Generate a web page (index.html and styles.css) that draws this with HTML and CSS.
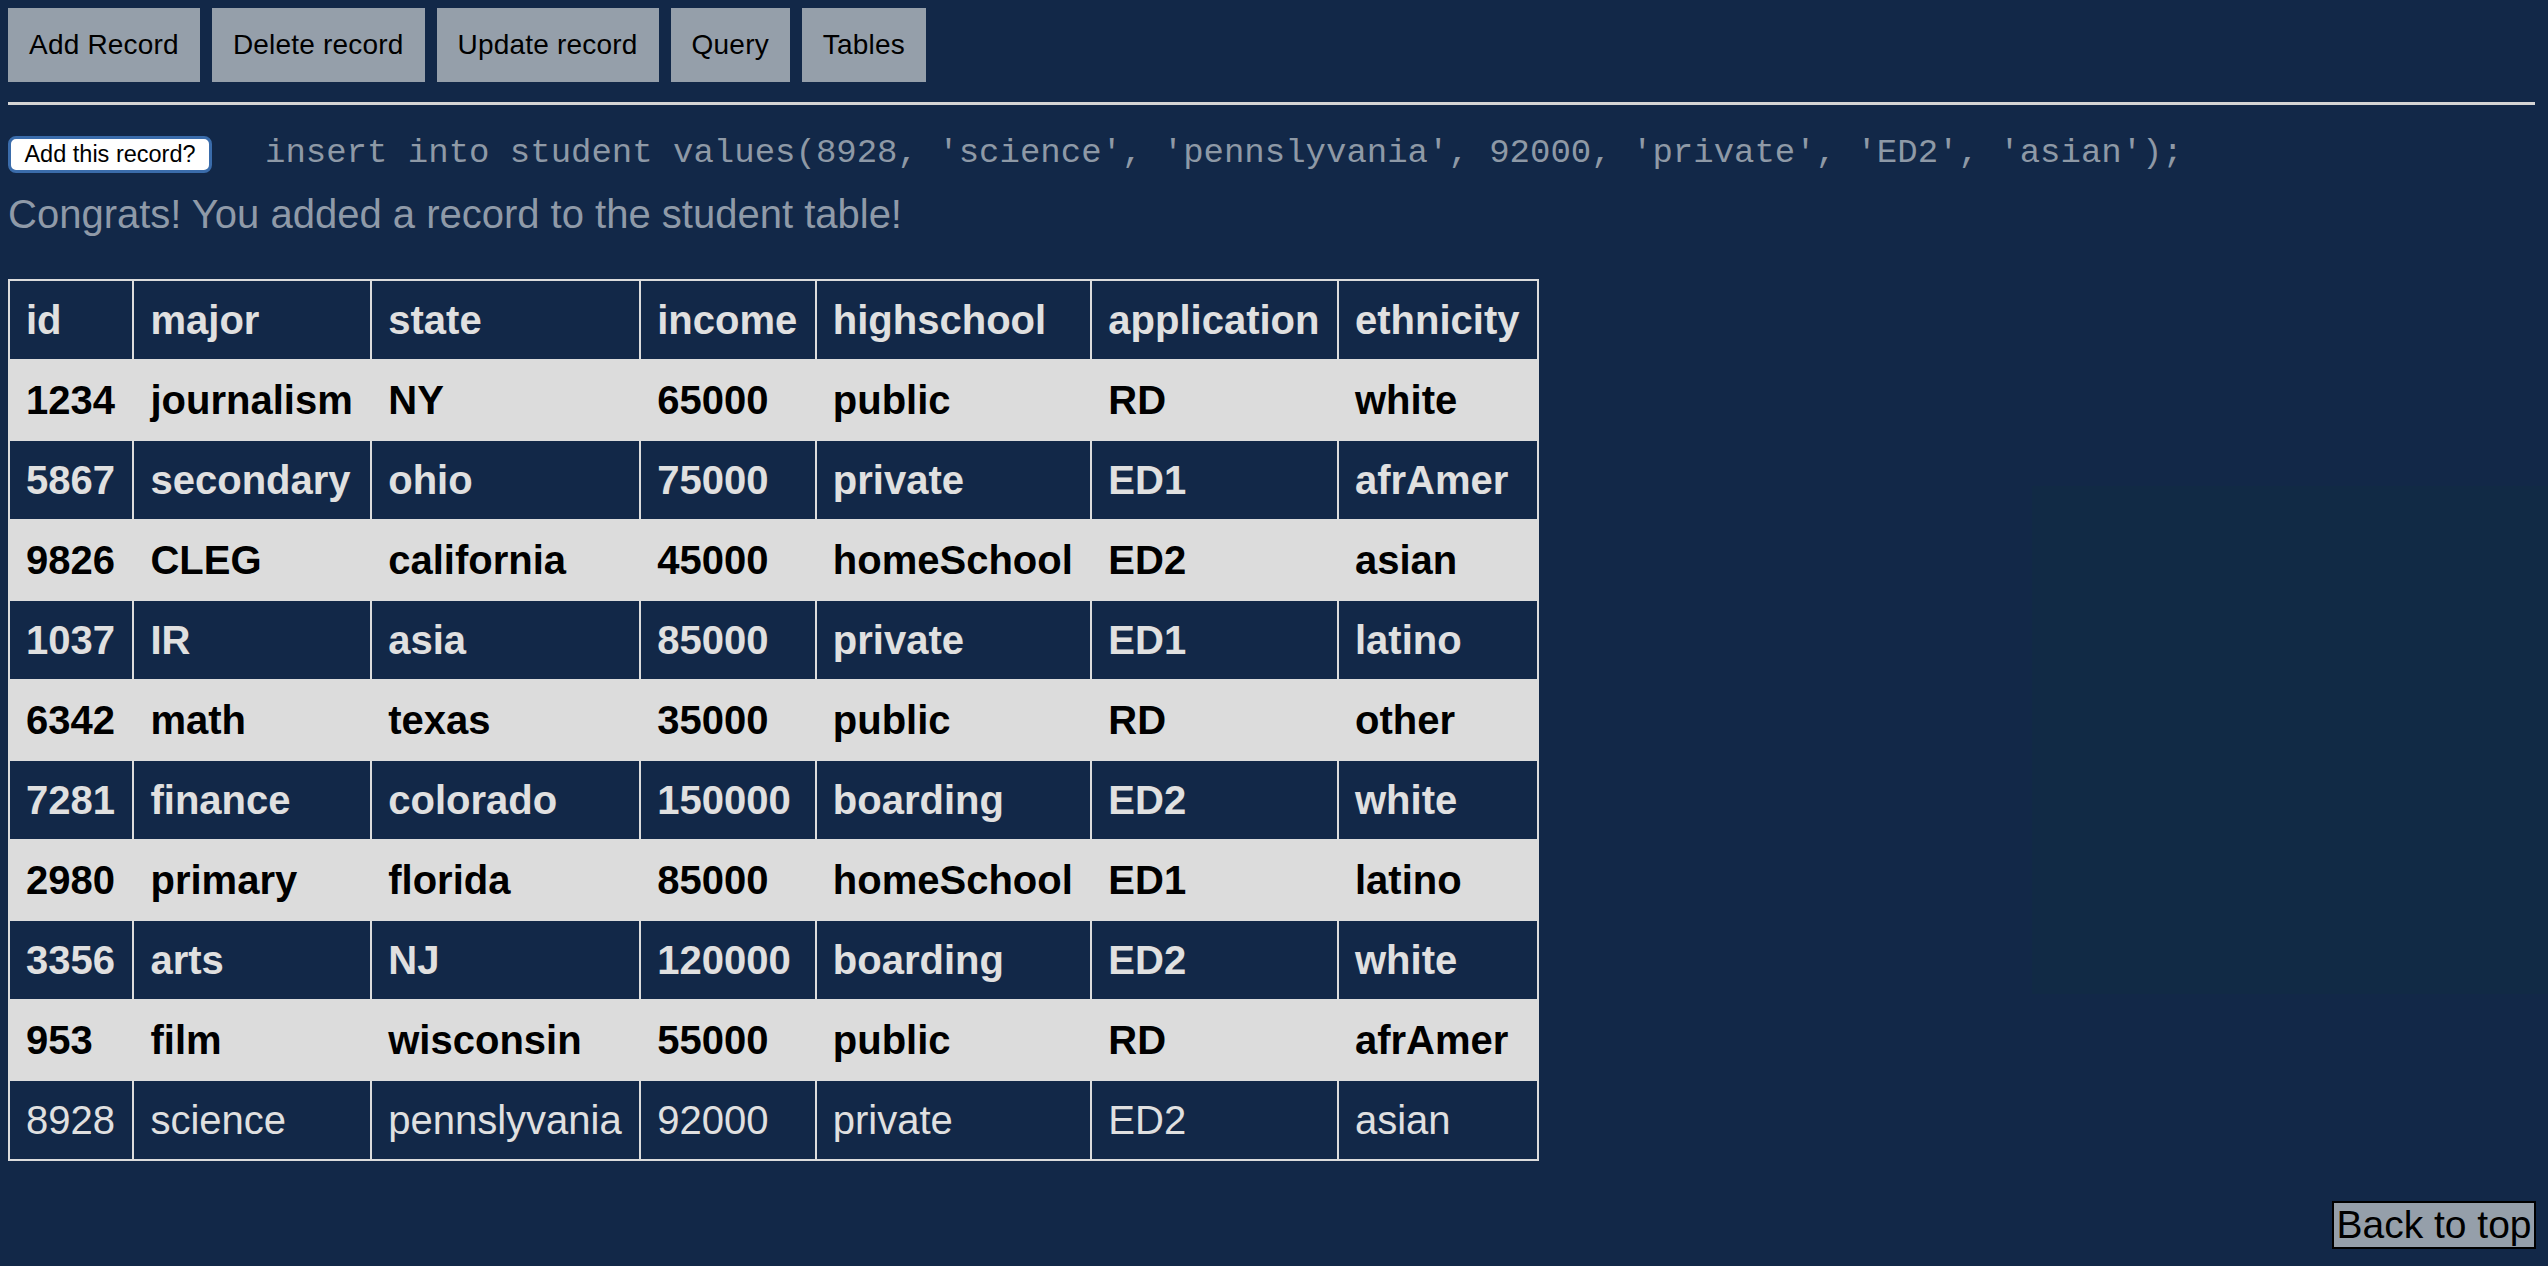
FILE: index.html
```html
<!DOCTYPE html>
<html>
<head>
<meta charset="utf-8">
<title>Student records</title>
<link rel="stylesheet" href="styles.css">
</head>
<body>
<div class="glow"></div>
<nav class="nav">
  <button class="nav-btn">Add Record</button>
  <button class="nav-btn">Delete record</button>
  <button class="nav-btn">Update record</button>
  <button class="nav-btn">Query</button>
  <button class="nav-btn">Tables</button>
</nav>
<hr class="rule">
<div class="insert-row">
  <button class="confirm-btn">Add this record?</button>
  <code class="sql">insert into student values(8928, 'science', 'pennslyvania', 92000, 'private', 'ED2', 'asian');</code>
</div>
<p class="congrats">Congrats! You added a record to the student table!</p>
<table class="records">
  <thead>
    <tr><th>id</th><th>major</th><th>state</th><th>income</th><th>highschool</th><th>application</th><th>ethnicity</th></tr>
  </thead>
  <tbody>
    <tr class="light"><td>1234</td><td>journalism</td><td>NY</td><td>65000</td><td>public</td><td>RD</td><td>white</td></tr>
    <tr class="dark"><td>5867</td><td>secondary</td><td>ohio</td><td>75000</td><td>private</td><td>ED1</td><td>afrAmer</td></tr>
    <tr class="light"><td>9826</td><td>CLEG</td><td>california</td><td>45000</td><td>homeSchool</td><td>ED2</td><td>asian</td></tr>
    <tr class="dark"><td>1037</td><td>IR</td><td>asia</td><td>85000</td><td>private</td><td>ED1</td><td>latino</td></tr>
    <tr class="light"><td>6342</td><td>math</td><td>texas</td><td>35000</td><td>public</td><td>RD</td><td>other</td></tr>
    <tr class="dark"><td>7281</td><td>finance</td><td>colorado</td><td>150000</td><td>boarding</td><td>ED2</td><td>white</td></tr>
    <tr class="light"><td>2980</td><td>primary</td><td>florida</td><td>85000</td><td>homeSchool</td><td>ED1</td><td>latino</td></tr>
    <tr class="dark"><td>3356</td><td>arts</td><td>NJ</td><td>120000</td><td>boarding</td><td>ED2</td><td>white</td></tr>
    <tr class="light"><td>953</td><td>film</td><td>wisconsin</td><td>55000</td><td>public</td><td>RD</td><td>afrAmer</td></tr>
    <tr class="dark new"><td>8928</td><td>science</td><td>pennslyvania</td><td>92000</td><td>private</td><td>ED2</td><td>asian</td></tr>
  </tbody>
</table>
<a class="back-top" href="#">Back to top</a>
</body>
</html>
```

FILE: styles.css
```css
html, body {
  margin: 0;
  padding: 0;
}
body {
  background: #122848;
  font-family: "Liberation Sans", Arial, Helvetica, sans-serif;
  padding: 8px;
  min-height: 1250px;
  box-sizing: border-box;
}
.glow {
  position: absolute;
  left: 2032px;
  top: 486px;
  width: 516px;
  height: 508px;
  background: #112a45;
  z-index: 0;
}
.nav {
  display: flex;
  gap: 12px;
  position: relative;
}
.nav-btn {
  font-family: "Liberation Sans", Arial, sans-serif;
  font-size: 28px;
  line-height: 34px;
  padding: 20px 21px;
  background: #959faa;
  color: #000;
  border: none;
  margin: 0;
  border-radius: 0;
  letter-spacing: 0.2px;
}
.rule {
  margin: 20px 5px 0 0;
  height: 0;
  border: none;
  border-top: 3px solid #d4d4d4;
}
.insert-row {
  display: flex;
  align-items: baseline;
  margin-top: 29px;
  position: relative;
}
.confirm-btn {
  font-family: "Liberation Sans", Arial, sans-serif;
  font-size: 23.5px;
  line-height: 29px;
  height: 37px;
  width: 204px;
  padding: 0;
  background: #fff;
  color: #000;
  border: 3px solid #3a6cab;
  border-radius: 8px;
  box-sizing: border-box;
}
.sql {
  font-family: "Liberation Mono", "Courier New", monospace;
  font-size: 34px;
  color: #8e99a6;
  margin-left: 53px;
  white-space: pre;
}
.congrats {
  margin: 19px 0 0 0;
  font-size: 40px;
  line-height: 45px;
  color: #8f9aa8;
  position: relative;
}
.records {
  margin-top: 42px;
  border-collapse: collapse;
  border: 2px solid #dcdcdc;
  font-size: 40px;
  line-height: 46px;
  position: relative;
}
.records th,
.records td {
  border: 2px solid #dcdcdc;
  padding: 16px 17.5px 16px 16px;
  text-align: left;
  white-space: nowrap;
}
.records th {
  font-weight: bold;
  color: #e0e0e0;
  background: #122848;
}
.records td {
  font-weight: bold;
}
.records .light td {
  background: #dcdcdc;
  color: #000;
}
.records .dark td {
  background: #122848;
  color: #e0e0e0;
}
.records .new td {
  font-weight: normal;
}
.back-top {
  position: fixed;
  right: 12px;
  bottom: 17px;
  width: 204px;
  height: 48px;
  box-sizing: border-box;
  border: 2px solid #000;
  background: #959faa;
  color: #000;
  font-size: 39px;
  line-height: 44px;
  text-align: center;
  text-decoration: none;
  white-space: nowrap;
  overflow: hidden;
}
```
